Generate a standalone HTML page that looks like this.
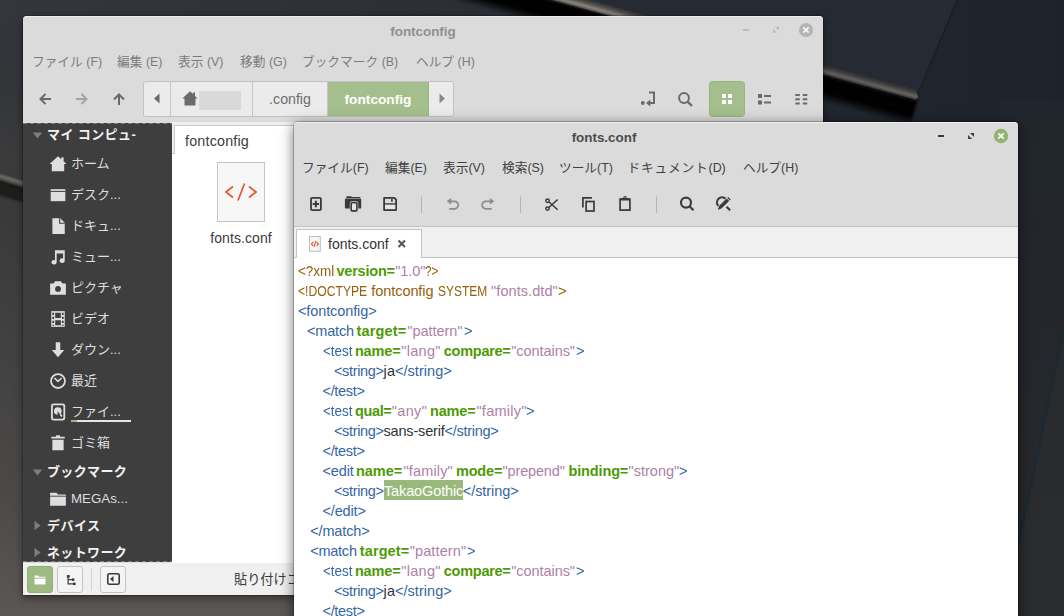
<!DOCTYPE html>
<html lang="ja">
<head>
<meta charset="utf-8">
<title>fonts.conf</title>
<style>
html,body{margin:0;padding:0;}
body{width:1064px;height:616px;overflow:hidden;position:relative;background:#20242b;
 font-family:"Liberation Sans","Noto Sans CJK JP",sans-serif;font-size:12.7px;color:#4a4a4a;}
#wall{position:absolute;left:0;top:0;width:1064px;height:616px;}
svg{position:absolute;overflow:visible;}
span.l{font-size:12.4px;}
/* ---------- Nemo window ---------- */
#nemo{position:absolute;left:23px;top:16px;width:800px;height:579px;background:#dbdbdb;border-radius:4px 4px 0 0;
 box-shadow:0 3px 9px rgba(0,0,0,.45),0 0 0 1px rgba(0,0,0,.18),inset 0 1px 0 #eeeeee;}
#nemo .title{position:absolute;left:0;top:0;width:800px;height:30px;line-height:31px;text-align:center;font-weight:bold;font-size:13.4px;color:#8f8f8f;}
.mi{position:absolute;white-space:nowrap;font-size:12.7px;line-height:20px;}
#nemo .mi{color:#7b7b7b;top:36px;}
#pathbar{position:absolute;left:120px;top:65px;width:311px;height:36px;box-sizing:border-box;border:1px solid #c2c2c2;border-radius:3px;background:#ebebeb;overflow:hidden;}
#pathbar div{position:absolute;top:0;height:34px;box-sizing:border-box;border-right:1px solid #c6c6c6;line-height:35px;text-align:center;font-size:13.2px;color:#6e6e6e;}
#side{position:absolute;left:0;top:107px;width:149px;height:439px;background:#3e3e3e;overflow:hidden;}
#side i{position:absolute;left:0;width:149px;height:1px;background:repeating-linear-gradient(90deg,#7b7b7b 0,#7b7b7b 4px,#3e3e3e 4px,#3e3e3e 7px);}
#side .h{position:absolute;left:24px;color:#f2f2f2;font-weight:bold;font-size:13px;line-height:20px;white-space:nowrap;}
#side .it{position:absolute;left:48px;color:#dedede;font-size:13px;line-height:20px;white-space:nowrap;}
#nview{position:absolute;left:149px;top:106px;width:651px;height:441px;background:#efefef;}
#ntab{position:absolute;left:2px;top:3px;width:128px;height:29px;background:#fff;border:1px solid #c8c8c8;border-bottom:none;box-sizing:border-box;}
#ncontent{position:absolute;left:0;top:31px;width:651px;height:410px;background:#fff;border-top:1px solid #c8c8c8;box-sizing:border-box;}
#nstatus{position:absolute;left:0;top:547px;width:800px;height:32px;background:#f0f0f0;}
.sbtn{position:absolute;top:2.6px;width:26px;height:27px;box-sizing:border-box;border:1px solid #c3c3c3;border-radius:3px;background:#f4f4f4;}
/* ---------- Xed window ---------- */
#xed{position:absolute;left:294px;top:122px;width:724px;height:500px;background:#dbdbdb;border-radius:4px 4px 0 0;
 box-shadow:0 3px 13px 1px rgba(0,0,0,.5),0 0 0 1px rgba(0,0,0,.22),inset 0 1px 0 #eeeeee;}
#xed .title{position:absolute;left:0;top:0;width:620px;height:30px;line-height:32px;text-align:center;font-weight:bold;font-size:13.4px;color:#4c4c4c;}
#xed .mi{color:#404040;top:36px;}
#xtabs{position:absolute;left:0;top:104px;width:724px;height:32px;background:#f0f0f0;border-top:1px solid #c4c4c4;border-bottom:1px solid #c4c4c4;box-sizing:border-box;}
#xtab{position:absolute;left:2px;top:2px;width:126px;height:29px;background:#fff;border:1px solid #c4c4c4;border-bottom:none;box-sizing:border-box;}
#xtext{position:absolute;left:0;top:136px;width:724px;height:365px;background:#fff;overflow:hidden;}
.tk{position:absolute;transform-origin:0 0;height:20px;line-height:20px;font-size:14.5px;white-space:pre;color:#2e3436;}
.t{color:#3465a4}.a{color:#4e9a06;font-weight:bold}.s{color:#ad7fa8}.p{color:#94600c}
.tk.sel{background:#9ab87c;color:#fff}
</style>
</head>
<body>
<svg id="wall" viewBox="0 0 1064 616">
 <defs>
  <linearGradient id="gbase" x1="0" y1="0" x2="1" y2="0">
   <stop offset="0" stop-color="#33363b"/><stop offset=".45" stop-color="#2b2e34"/><stop offset=".62" stop-color="#252930"/><stop offset="1" stop-color="#1e232b"/>
  </linearGradient>
  <linearGradient id="gleft" x1="0" y1="0" x2="0" y2="1">
   <stop offset="0" stop-color="#33363b"/><stop offset=".14" stop-color="#333539"/><stop offset=".25" stop-color="#3b3b3c"/><stop offset=".33" stop-color="#39393a"/><stop offset=".5" stop-color="#3f3f3f"/><stop offset=".8" stop-color="#4b4948"/><stop offset="1" stop-color="#5b5755"/>
  </linearGradient>
  <linearGradient id="gright" x1="0" y1="0" x2="0" y2="1">
   <stop offset="0" stop-color="#21262d"/><stop offset=".5" stop-color="#24272c"/><stop offset="1" stop-color="#2a2b2d"/>
  </linearGradient>
  <linearGradient id="gedge" gradientUnits="userSpaceOnUse" x1="700" y1="29.3" x2="696.9" y2="40.63">
   <stop offset="0" stop-color="#272b32"/><stop offset=".35" stop-color="#4f4d4a"/><stop offset=".68" stop-color="#8a857c"/><stop offset=".88" stop-color="#55524d"/><stop offset="1" stop-color="#040404"/>
  </linearGradient>
  <linearGradient id="gdim" gradientUnits="userSpaceOnUse" x1="600" y1="0" x2="917" y2="0">
   <stop offset="0" stop-color="#1c1e22" stop-opacity="0"/><stop offset=".7" stop-color="#1c1e22" stop-opacity=".38"/><stop offset="1" stop-color="#1c1e22" stop-opacity=".3"/>
  </linearGradient>
  <linearGradient id="gshadow" gradientUnits="userSpaceOnUse" x1="700" y1="41.3" x2="693.1" y2="66.4">
   <stop offset="0" stop-color="#020202" stop-opacity="1"/><stop offset=".62" stop-color="#030303" stop-opacity=".97"/><stop offset="1" stop-color="#0a0b0d" stop-opacity="0"/>
  </linearGradient>
  <linearGradient id="gstreak" gradientUnits="userSpaceOnUse" x1="10" y1="175.200" x2="7.500" y2="183.400">
   <stop offset="0" stop-color="#3c3c3d"/><stop offset=".45" stop-color="#6c6964"/><stop offset=".8" stop-color="#474543"/><stop offset="1" stop-color="#1f1e1d"/>
  </linearGradient>
  <linearGradient id="gstreaksh" gradientUnits="userSpaceOnUse" x1="10" y1="184" x2="5" y2="201">
   <stop offset="0" stop-color="#1a1918"/><stop offset=".7" stop-color="#1f1e1d" stop-opacity=".97"/><stop offset="1" stop-color="#39393a" stop-opacity="0"/>
  </linearGradient>
  <filter id="blur2"><feGaussianBlur stdDeviation="1.6"/></filter>
  <filter id="blur1"><feGaussianBlur stdDeviation="0.6"/></filter>
 </defs>
 <rect width="1064" height="616" fill="url(#gbase)"/>
 <!-- left column -->
 <rect x="0" y="0" width="300" height="616" fill="url(#gleft)"/>
 <rect x="0" y="0" width="1064" height="18" fill="url(#gbase)"/>
 <!-- right column beside editor -->
 <rect x="1000" y="100" width="64" height="516" fill="url(#gright)"/>
 <polygon points="1066,318 1066,616 1016,616 1016,555" fill="#2b2d2f" opacity=".55"/>
 <line x1="1066.500" y1="316" x2="1015.500" y2="557.500" stroke="#1c2833" stroke-width="2.600" opacity=".9"/>
 <!-- big slab top-right: top surface -->
 <polygon points="520,-20 957,-1 917,95" fill="#262a32"/>
 <line x1="957.5" y1="-1" x2="917.500" y2="95" stroke="#1a1e25" stroke-width="1.4"/>
 <!-- slab shadow -->
 <polygon points="440,-30.200 915,100.400 918,99 909,128 440,-1" fill="url(#gshadow)" filter="url(#blur2)"/>
 <!-- slab lit edge -->
 <g filter="url(#blur1)">
  <path d="M530,-17.450 L914,88.150 Q918.500,93.500 917.500,97.500 Q916,101 913,99.900 L530,-5.450z" fill="url(#gedge)"/>
  <path d="M530,-17.450 L914,88.150 Q918.500,93.500 917.500,97.500 Q916,101 913,99.900 L530,-5.450z" fill="url(#gdim)"/>
 </g>
 <!-- left streak -->
 <polygon points="-2,181 30,191 30,210 -2,200" fill="url(#gstreaksh)" filter="url(#blur1)"/>
 <polygon points="-2,172.400 30,182.300 30,191.500 -2,181.600" fill="url(#gstreak)" filter="url(#blur1)"/>
</svg>
<div id="nemo">
 <div class="title">fontconfig</div>
 <!-- window controls -->
 <svg style="left:719px;top:6px" width="72" height="16" viewBox="0 0 72 16">
  <rect x="1" y="7" width="6" height="2" fill="#bdbdbd"/>
  <path d="M33 4.800h4v4zM31 6.800v4h4z" fill="#bdbdbd"/>
  <circle cx="64" cy="8" r="7" fill="#b4b4b4"/>
  <path d="M61.300 5.300l5.400 5.400M66.700 5.300l-5.400 5.400" stroke="#f6f6f6" stroke-width="1.700"/>
 </svg>
 <!-- menubar -->
 <span class="mi" style="left:9px">ファイル <span class="l">(F)</span></span>
 <span class="mi" style="left:94px">編集 <span class="l">(E)</span></span>
 <span class="mi" style="left:155px">表示 <span class="l">(V)</span></span>
 <span class="mi" style="left:217px">移動 <span class="l">(G)</span></span>
 <span class="mi" style="left:279px">ブックマーク <span class="l">(B)</span></span>
 <span class="mi" style="left:393px">ヘルプ <span class="l">(H)</span></span>
 <!-- toolbar nav arrows -->
 <svg style="left:14px;top:75px" width="96" height="16" viewBox="0 0 96 16">
  <path d="M14 8H4M8.500 3L3.500 8l5 5" fill="none" stroke="#6a6a6a" stroke-width="2"/>
  <path d="M39 8h10M44.5 3l5 5-5 5" fill="none" stroke="#a3a3a3" stroke-width="2"/>
  <path d="M82 14V4M77 8.5l5-5 5 5" fill="none" stroke="#6a6a6a" stroke-width="2"/>
 </svg>
 <div id="pathbar">
  <div style="left:0;width:27px"><svg style="left:9px;top:11px" width="8" height="11" viewBox="0 0 8 11"><path d="M6.5 0.5v10l-5.5-5z" fill="#6a6a6a"/></svg></div>
  <div style="left:27px;width:82px"><svg style="left:10.500px;top:9px" width="16" height="15" viewBox="0 0 16 15"><path d="M8 0.3L0.3 7.6h2.2V14.5h11V7.6h2.2L13 5V1.5h-2v1.6z" fill="#6a6a6a"/></svg><span style="position:absolute;left:28px;top:9px;width:42px;height:19px;background:#d9d9d9"></span></div>
  <div style="left:109px;width:75px;font-size:14.2px">.config</div>
  <div style="left:184px;width:101px;font-size:13.7px;background:#a4bf8d;color:#fff;font-weight:bold;border-right-color:#9ab583">fontconfig</div>
  <div style="left:285px;width:24px;border-right:none"><svg style="left:9px;top:11px" width="8" height="11" viewBox="0 0 8 11"><path d="M1.5 0.5v10l5.5-5z" fill="#8a8a8a"/></svg></div>
 </div>
 <!-- right toolbar -->
 <svg style="left:610px;top:65px" width="180" height="36" viewBox="0 0 180 36">
  <!-- toggle location -->
  <circle cx="9.800" cy="22" r="1.900" fill="#6a6a6a"/>
  <path d="M16 11.500h5v10.500h-4.500" fill="none" stroke="#6a6a6a" stroke-width="2"/>
  <path d="M13 22l4.300 -3.400v6.800z" fill="#6a6a6a"/>
  <!-- search -->
  <circle cx="51" cy="17" r="4.900" fill="none" stroke="#6a6a6a" stroke-width="2"/>
  <path d="M54.600 20.600l4.300 4.300" stroke="#6a6a6a" stroke-width="2.200"/>
  <!-- grid (active) -->
  <rect x="76.500" y="0.500" width="35" height="35" rx="3" fill="#a4bf8d" stroke="#98b480"/>
  <path d="M89 13h4v4h-4zM95 13h4v4h-4zM89 19h4v4h-4zM95 19h4v4h-4z" fill="#fff"/>
  <!-- list -->
  <path d="M125 13h4v4h-4zM125 19.500h4v4h-4zM131 14h7v2h-7zM131 20.500h7v2h-7z" fill="#6a6a6a"/>
  <!-- compact -->
  <path d="M162.300 13h4.500v2h-4.500zM162.300 17.300h4.500v2h-4.500zM162.300 21.600h4.500v2h-4.500zM169.800 13h4.500v2h-4.500zM169.800 17.300h4.500v2h-4.500zM169.800 21.600h4.500v2h-4.500z" fill="#6a6a6a"/>
 </svg>
 <!-- sidebar -->
 <div id="side">
  <i style="top:0"></i><i style="top:438px"></i>
  <svg style="left:9px;top:9px" width="12" height="8" viewBox="0 0 12 8"><path d="M0.800 0.500h9.400l-4.700 6z" fill="#7d7d7d"/></svg>
  <span class="h" style="top:2px;letter-spacing:.4px">マイ コンピュ-</span>
  <svg style="left:26px;top:32px" width="18" height="18" viewBox="0 0 16 16"><path d="M8 1L0.500 8h2v6.500h11V8h2L13 5.500V2h-2v1.700z" fill="#dedede"/></svg>
  <span class="it" style="top:31px">ホーム</span>
  <svg style="left:26px;top:63px" width="18" height="18" viewBox="0 0 16 16"><path d="M1.500 2.800h13v10.700h-13z" fill="#dedede"/><path d="M1.500 4.800h13" stroke="#3e3e3e" stroke-width=".9"/></svg>
  <span class="it" style="top:62px">デスク...</span>
  <svg style="left:26px;top:94px" width="18" height="18" viewBox="0 0 16 16"><path d="M3 1h7l4 4v10H3z" fill="#dedede"/><path d="M9.500 1v4.500H14" fill="none" stroke="#3e3e3e" stroke-width="1"/></svg>
  <span class="it" style="top:93px">ドキュ...</span>
  <svg style="left:26px;top:125px" width="18" height="18" viewBox="0 0 16 16"><path d="M5.300 2h8.700v9.300a2.300 2 0 1 1-1.500-1.900V4.800H6.800v7.900a2.300 2 0 1 1-1.500-1.900z" fill="#dedede"/></svg>
  <span class="it" style="top:124px">ミュー...</span>
  <svg style="left:26px;top:156px" width="18" height="18" viewBox="0 0 16 16"><path d="M1 4h3l1.500-2h5L12 4h3v10H1z" fill="#dedede"/><circle cx="8" cy="8.800" r="2.600" fill="#3e3e3e"/></svg>
  <span class="it" style="top:155px">ピクチャ</span>
  <svg style="left:26px;top:187px" width="18" height="18" viewBox="0 0 16 16"><path d="M2 1h12v14H2z" fill="#dedede"/><path d="M5.500 2.500h5v4.500h-5zM5.500 9h5v4.500h-5z" fill="#3e3e3e"/><path d="M3 2.500h1.500v2H3zM3 6h1.500v2H3zM3 9.500h1.500v2H3zM3 13h1.500v1H3zM11.500 2.500H13v2h-1.500zM11.500 6H13v2h-1.500zM11.500 9.500H13v2h-1.500zM11.500 13H13v1h-1.500z" fill="#3e3e3e"/></svg>
  <span class="it" style="top:186px">ビデオ</span>
  <svg style="left:26px;top:218px" width="18" height="18" viewBox="0 0 16 16"><path d="M6 1h4v7h3.500L8 14.500 2.500 8H6z" fill="#dedede"/></svg>
  <span class="it" style="top:217px">ダウン...</span>
  <svg style="left:26px;top:249px" width="18" height="18" viewBox="0 0 16 16"><circle cx="8" cy="8" r="6.200" fill="none" stroke="#dedede" stroke-width="1.600"/><path d="M4.800 5.300l3.200 3 3.200-3" fill="none" stroke="#dedede" stroke-width="1.400"/></svg>
  <span class="it" style="top:248px">最近</span>
  <svg style="left:26px;top:280px" width="18" height="18" viewBox="0 0 16 16"><rect x="2.600" y="1.300" width="11" height="13.400" rx="1.500" fill="none" stroke="#dedede" stroke-width="1.600"/><circle cx="7.800" cy="7.200" r="3.400" fill="#dedede"/><path d="M8 7.500l3.500 4.500" stroke="#dedede" stroke-width="1.600"/><path d="M7.800 7.200l2.300 3.600h-2.600z" fill="#3e3e3e"/></svg>
  <span class="it" style="top:279px">ファイ...</span>
  <span style="position:absolute;left:48px;top:297px;width:60px;height:2px;background:#e6e6e6"></span>
  <span style="position:absolute;left:48px;top:297px;width:6px;height:2px;background:#9ab87c"></span>
  <svg style="left:26px;top:311px" width="18" height="18" viewBox="0 0 16 16"><path d="M2 2.500h4l.5-1.500h3l.5 1.500h4V4H2zM3 5h10v9.500H3z" fill="#dedede"/></svg>
  <span class="it" style="top:310px">ゴミ箱</span>
  <svg style="left:9px;top:346px" width="12" height="8" viewBox="0 0 12 8"><path d="M0.800 0.500h9.400l-4.700 6z" fill="#7d7d7d"/></svg>
  <span class="h" style="top:339px;letter-spacing:.35px">ブックマーク</span>
  <svg style="left:26px;top:367px" width="18" height="18" viewBox="0 0 16 16"><path d="M1 2.500h5.500l1.500 1.500H15v10H1z" fill="#dedede"/><path d="M1 5.500h14" stroke="#3e3e3e" stroke-width=".8"/></svg>
  <span class="it" style="top:366px"><span class="l" style="font-size:13.3px">MEGAs...</span></span>
  <svg style="left:11px;top:397px" width="8" height="12" viewBox="0 0 8 12"><path d="M0.500 0.800v9.400l6-4.700z" fill="#7d7d7d"/></svg>
  <span class="h" style="top:393px;letter-spacing:.5px">デバイス</span>
  <svg style="left:11px;top:424px" width="8" height="12" viewBox="0 0 8 12"><path d="M0.500 0.800v9.400l6-4.700z" fill="#7d7d7d"/></svg>
  <span class="h" style="top:420px;letter-spacing:.35px">ネットワーク</span>
 </div>
 <!-- view -->
 <div id="nview">
  <div id="ncontent"></div>
  <div id="ntab"><span style="position:absolute;left:10px;top:5px;font-size:14.3px;letter-spacing:.2px;line-height:20px;color:#3c3c3c">fontconfig</span></div>
  <div style="position:absolute;left:45px;top:40px;width:48px;height:60px;box-sizing:border-box;background:#f7f7f7;border:1px solid #c4c4c4"></div>
  <svg style="left:51px;top:58px" width="36" height="24" viewBox="0 0 36 24"><path d="M10 6.500L3 12l7 5.500M26 6.500L33 12l-7 5.500M21.500 3.500l-6.500 17" fill="none" stroke="#e4572e" stroke-width="1.700"/></svg>
  <span style="position:absolute;left:27px;top:106px;width:84px;text-align:center;font-size:14px;letter-spacing:.1px;line-height:20px;color:#3c3c3c">fonts.conf</span>
 </div>
 <!-- statusbar -->
 <div id="nstatus">
  <div class="sbtn" style="left:4px;background:#9dba82;border-color:#90ad76"><svg style="left:6px;top:8px" width="12" height="10" viewBox="0 0 13 11"><path d="M0.500 0.500h4l1 1.500h7v8.500h-12z" fill="#fff"/><path d="M0.500 3.500h12" stroke="#9dba82" stroke-width="1"/></svg></div>
  <div class="sbtn" style="left:34px"><svg style="left:8px;top:8px" width="10" height="11" viewBox="0 0 12 13"><path d="M2.500 1v9.500h7M2.500 5.500h4.500" fill="none" stroke="#3a3a3a" stroke-width="1.400"/><rect x="1" y="0" width="3.500" height="3" fill="#3a3a3a"/><rect x="7" y="4" width="3" height="3" fill="#3a3a3a"/><rect x="8.500" y="9" width="3" height="3" fill="#3a3a3a"/></svg></div>
  <span style="position:absolute;left:68px;top:5px;width:1px;height:23px;background:#d4d4d4"></span>
  <div class="sbtn" style="left:77px"><svg style="left:6px;top:6px" width="13" height="12" viewBox="0 0 13 12"><rect x="0.800" y="0.800" width="11.400" height="10.400" rx="1.500" fill="none" stroke="#3a3a3a" stroke-width="1.600"/><path d="M6.500 3v6L3 6z" fill="#3a3a3a"/></svg></div>
  <span style="position:absolute;left:211px;top:7px;font-size:13.2px;line-height:20px;color:#3a3a3a;white-space:nowrap">貼り付けコマンドを選択すると "fonts.conf" がコピーされます</span>
 </div>
</div>
<div id="xed">
 <div class="title">fonts.conf</div>
 <svg style="left:639px;top:6px" width="78" height="16" viewBox="0 0 78 16">
  <rect x="5" y="7" width="6" height="2" fill="#3c3c3c"/>
  <path d="M37 5h4v4zM35.100 6.900v4h4z" fill="#3c3c3c"/>
  <circle cx="68" cy="8" r="7.200" fill="#92b372"/>
  <path d="M65.300 5.300l5.400 5.400M70.700 5.300l-5.400 5.400" stroke="#fff" stroke-width="1.700"/>
 </svg>
 <span class="mi" style="left:8px">ファイル<span class="l">(F)</span></span>
 <span class="mi" style="left:91px">編集<span class="l">(E)</span></span>
 <span class="mi" style="left:149px">表示<span class="l">(V)</span></span>
 <span class="mi" style="left:208px">検索<span class="l">(S)</span></span>
 <span class="mi" style="left:265px">ツール<span class="l">(T)</span></span>
 <span class="mi" style="left:333.6px;letter-spacing:.8px">ドキュメント<span class="l" style="letter-spacing:0">(D)</span></span>
 <span class="mi" style="left:449px">ヘルプ<span class="l">(H)</span></span>
 <!-- toolbar : icon centres at y=204 (82 local) -->
 <svg style="left:0;top:62px" width="724" height="42" viewBox="0 0 724 42">
  <g fill="none" stroke="#3a3a3a" stroke-width="1.800">
   <!-- new -->
   <rect x="17" y="13.900" width="9.900" height="12.200" rx="1.200"/>
   <path d="M21.900 16.800v6.400M18.700 20h6.400" stroke-width="2"/>
  </g>
  <!-- open (stacked documents) -->
  <path d="M52.800 12.200h4.600v0.900h-4.600z" fill="#3a3a3a"/>
  <path d="M52.200 13h14.200v1h-14.200z" fill="#3a3a3a"/>
  <rect x="50.900" y="14.600" width="16.300" height="10" rx="1.200" fill="#3a3a3a"/>
  <rect x="57.200" y="18.700" width="5.700" height="8.200" rx="0.800" fill="none" stroke="#cfcfcf" stroke-width="2.800"/><rect x="57.200" y="18.700" width="5.700" height="8.200" rx="0.800" fill="#e4e4e4" stroke="#3a3a3a" stroke-width="1.600"/>
  <!-- save -->
  <path d="M90.100 13.900h10.200l1.800 1.800v10.300h-12z" fill="none" stroke="#3a3a3a" stroke-width="1.800" stroke-linejoin="round"/>
  <path d="M90.500 20h11.400" stroke="#3a3a3a" stroke-width="1.500"/>
  <path d="M91 20.800h10.200v4.400h-10.200z" fill="#e6e6e6"/>
  <path d="M97.100 15h1.600v2.800h-1.600z" fill="#3a3a3a"/>
  <path d="M127.500 12.500v16.500M226.500 12.500v16.500M362.500 12.500v16.500" stroke="#b4b4b4" stroke-width="1"/>
  <g fill="none" stroke="#8c8c8c" stroke-width="1.700">
   <!-- undo -->
   <path d="M156.500 17.300h4a3.750 3.750 0 0 1 0 7.500h-5.300"/>
   <!-- redo -->
   <path d="M196.500 17.300h-4.650a3.750 3.750 0 0 0 0 7.500h5.950"/>
  </g>
  <path d="M152.700 17.300l4.400 -3.300v6.600zM200.300 17.300l-4.400 -3.300v6.600z" fill="#8c8c8c"/>
  <g fill="none" stroke="#3a3a3a" stroke-width="1.500">
   <!-- cut -->
   <circle cx="253.500" cy="16.700" r="1.700"/><circle cx="253.500" cy="24.600" r="1.700"/>
   <path d="M254.800 17.800l8.900 8M254.800 23.500l8.900 -8"/>
  </g>
  <g fill="none" stroke="#3a3a3a" stroke-width="1.700">
   <!-- copy -->
   <path d="M288.900 23.600v-9.700h9"/>
   <rect x="292.100" y="17.500" width="7.900" height="9.500"/>
   <!-- paste -->
   <path d="M326.100 15.200h9.800v10.900h-9.800z"/>
   <path d="M326 15.400h10" stroke-width="2.200"/>
  </g>
  <circle cx="331" cy="13.600" r="1.700" fill="#3a3a3a"/><circle cx="331" cy="13.500" r="0.600" fill="#dbdbdb"/>
  <g fill="none" stroke="#3a3a3a">
   <!-- find -->
   <circle cx="392" cy="18.600" r="5" stroke-width="2.100"/>
   <path d="M395.800 22.400l3.700 3.800" stroke-width="2.100"/>
   <!-- find & replace -->
   <path d="M424.300 21.800a5.100 5.100 0 0 1 7.200 -7.200" stroke-width="2.100"/>
   <path d="M432.600 22.700l3.500 3.600" stroke-width="2.100"/>
  </g>
  <path d="M423.800 25.700l1.200 -3.700 7.600 -7.400 2.500 2.500 -7.600 7.500z" fill="#3a3a3a"/>
  <path d="M433.300 13.900l0.900 -0.900 2.500 2.500 -0.900 0.900z" fill="#3a3a3a"/>
 </svg>
 <div id="xtabs">
  <div id="xtab">
   <svg style="left:12px;top:6px" width="12" height="16" viewBox="0 0 12 16"><rect x="0.500" y="0.500" width="10.800" height="14.800" fill="#f6f6f6" stroke="#bdbdbd"/><path d="M4.200 5.800L2.500 7.900l1.700 2.100M7.700 5.800l1.700 2.100-1.700 2.100M6.800 5L5.100 10.800" fill="none" stroke="#e4572e" stroke-width="1.100"/></svg>
   <span style="position:absolute;left:31px;top:4px;font-size:14px;line-height:20px;color:#333">fonts.conf</span>
   <svg style="left:100px;top:9px" width="10" height="10" viewBox="0 0 10 10"><path d="M1.500 1.500l6.500 6.500M8 1.500L1.500 8" stroke="#555" stroke-width="2"/></svg>
  </div>
 </div>
 <div id="xtext">
<span class="tk p" style="left:4.0px;top:3px;transform:scaleX(0.926)">&lt;?xml</span>
<span class="tk a" style="left:42.5px;top:3px;letter-spacing:-0.22px">version=</span>
<span class="tk s" style="left:101.2px;top:3px;letter-spacing:-0.07px">&quot;1.0&quot;</span>
<span class="tk p" style="left:131.0px;top:3px;transform:scaleX(0.816)">?&gt;</span>
<span class="tk p" style="left:4.0px;top:23px;transform:scaleX(0.838)">&lt;!DOCTYPE</span>
<span class="tk p" style="left:77.3px;top:23px;letter-spacing:-0.07px">fontconfig</span>
<span class="tk p" style="left:144.1px;top:23px;transform:scaleX(0.825)">SYSTEM</span>
<span class="tk s" style="left:197.1px;top:23px;letter-spacing:0.07px">&quot;fonts.dtd&quot;</span>
<span class="tk p" style="left:264.0px;top:23px;transform:scaleX(1.015)">&gt;</span>
<span class="tk t" style="left:4.0px;top:43px;letter-spacing:-0.11px">&lt;fontconfig&gt;</span>
<span class="tk t" style="left:13.0px;top:63px;letter-spacing:-0.18px">&lt;match</span>
<span class="tk a" style="left:62.5px;top:63px;letter-spacing:0.18px">target=</span>
<span class="tk s" style="left:113.3px;top:63px;letter-spacing:-0.03px">&quot;pattern&quot;</span>
<span class="tk t" style="left:170.1px;top:63px;transform:scaleX(1.015)">&gt;</span>
<span class="tk t" style="left:28.5px;top:83px;transform:scaleX(0.926)">&lt;test</span>
<span class="tk a" style="left:60.9px;top:83px;letter-spacing:-0.15px">name=</span>
<span class="tk s" style="left:107.2px;top:83px;letter-spacing:0.30px">&quot;lang&quot;</span>
<span class="tk a" style="left:149.8px;top:83px;letter-spacing:-0.27px">compare=</span>
<span class="tk s" style="left:217.3px;top:83px;letter-spacing:-0.07px">&quot;contains&quot;</span>
<span class="tk t" style="left:281.5px;top:83px;transform:scaleX(1.015)">&gt;</span>
<span class="tk t" style="left:40.0px;top:103px;letter-spacing:-0.36px">&lt;string&gt;</span>
<span class="tk x" style="left:89.4px;top:103px;letter-spacing:0.35px">ja</span>
<span class="tk t" style="left:101.0px;top:103px;letter-spacing:0.04px">&lt;/string&gt;</span>
<span class="tk t" style="left:28.5px;top:123px;letter-spacing:-0.32px">&lt;/test&gt;</span>
<span class="tk t" style="left:28.5px;top:143px;transform:scaleX(0.926)">&lt;test</span>
<span class="tk a" style="left:60.9px;top:143px;letter-spacing:-0.34px">qual=</span>
<span class="tk s" style="left:97.8px;top:143px;letter-spacing:0.34px">&quot;any&quot;</span>
<span class="tk a" style="left:135.9px;top:143px;letter-spacing:-0.11px">name=</span>
<span class="tk s" style="left:182.4px;top:143px;letter-spacing:0.28px">&quot;family&quot;</span>
<span class="tk t" style="left:231.9px;top:143px;transform:scaleX(1.015)">&gt;</span>
<span class="tk t" style="left:40.0px;top:163px;letter-spacing:-0.36px">&lt;string&gt;</span>
<span class="tk x" style="left:89.4px;top:163px;letter-spacing:-0.16px">sans-serif</span>
<span class="tk t" style="left:150.5px;top:163px;letter-spacing:-0.27px">&lt;/string&gt;</span>
<span class="tk t" style="left:28.5px;top:183px;letter-spacing:-0.32px">&lt;/test&gt;</span>
<span class="tk t" style="left:28.5px;top:203px;letter-spacing:-0.13px">&lt;edit</span>
<span class="tk a" style="left:62.0px;top:203px;letter-spacing:-0.03px">name=</span>
<span class="tk s" style="left:109.4px;top:203px;letter-spacing:0.17px">&quot;family&quot;</span>
<span class="tk a" style="left:162.0px;top:203px;letter-spacing:-0.19px">mode=</span>
<span class="tk s" style="left:208.6px;top:203px;letter-spacing:-0.16px">&quot;prepend&quot;</span>
<span class="tk a" style="left:274.5px;top:203px;letter-spacing:-0.14px">binding=</span>
<span class="tk s" style="left:334.5px;top:203px;letter-spacing:0.02px">&quot;strong&quot;</span>
<span class="tk t" style="left:384.6px;top:203px;transform:scaleX(1.015)">&gt;</span>
<span class="tk t" style="left:40.0px;top:223px;letter-spacing:-0.36px">&lt;string&gt;</span>
<span class="tk sel" style="left:90.0px;top:222px;line-height:22px;width:79.2px;letter-spacing:-0.13px">TakaoGothic</span>
<span class="tk t" style="left:168.8px;top:223px;letter-spacing:-0.06px">&lt;/string&gt;</span>
<span class="tk t" style="left:28.5px;top:243px;letter-spacing:-0.16px">&lt;/edit&gt;</span>
<span class="tk t" style="left:16.2px;top:263px;letter-spacing:-0.14px">&lt;/match&gt;</span>
<span class="tk t" style="left:16.2px;top:283px;letter-spacing:-0.24px">&lt;match</span>
<span class="tk a" style="left:65.8px;top:283px;letter-spacing:0.10px">target=</span>
<span class="tk s" style="left:115.8px;top:283px;letter-spacing:0.10px">&quot;pattern&quot;</span>
<span class="tk t" style="left:172.7px;top:283px;transform:scaleX(1.015)">&gt;</span>
<span class="tk t" style="left:28.5px;top:303px;transform:scaleX(0.926)">&lt;test</span>
<span class="tk a" style="left:60.9px;top:303px;letter-spacing:-0.15px">name=</span>
<span class="tk s" style="left:107.2px;top:303px;letter-spacing:0.30px">&quot;lang&quot;</span>
<span class="tk a" style="left:149.8px;top:303px;letter-spacing:-0.27px">compare=</span>
<span class="tk s" style="left:217.3px;top:303px;letter-spacing:-0.07px">&quot;contains&quot;</span>
<span class="tk t" style="left:281.5px;top:303px;transform:scaleX(1.015)">&gt;</span>
<span class="tk t" style="left:40.0px;top:323px;letter-spacing:-0.36px">&lt;string&gt;</span>
<span class="tk x" style="left:89.4px;top:323px;letter-spacing:0.35px">ja</span>
<span class="tk t" style="left:101.0px;top:323px;letter-spacing:0.04px">&lt;/string&gt;</span>
<span class="tk t" style="left:28.5px;top:343px;letter-spacing:-0.32px">&lt;/test&gt;</span>
 </div>
</div>
</body>
</html>
